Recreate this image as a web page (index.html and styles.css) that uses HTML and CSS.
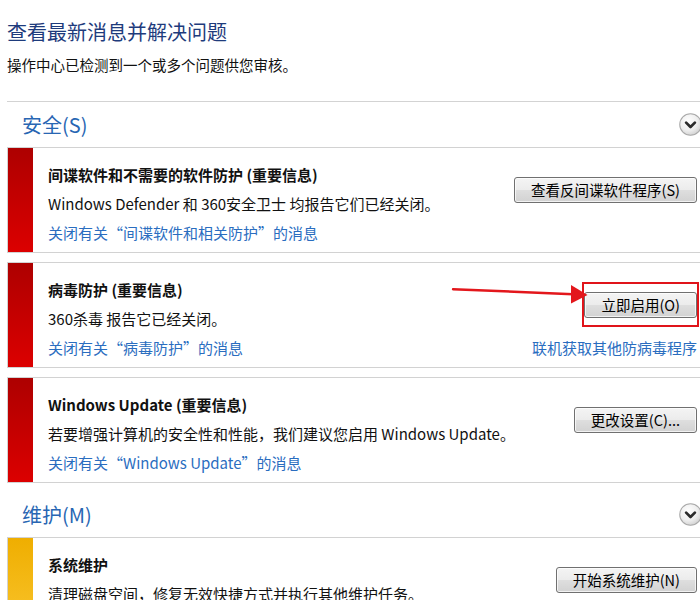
FILE: index.html
```html
<!DOCTYPE html>
<html lang="zh-CN">
<head>
<meta charset="utf-8">
<title>操作中心</title>
<link rel="stylesheet" href="styles.css">
</head>
<body>
<div class="page">
  <h1 class="title">查看最新消息并解决问题</h1>
  <p class="subtitle">操作中心已检测到一个或多个问题供您审核。</p>
  <div class="sep"></div>

  <div class="section-head">
    <span class="section-name">安全(S)</span>
    <svg class="chev" viewBox="0 0 22 22" width="23" height="23">
      <defs>
        <radialGradient id="cg" cx="40%" cy="35%" r="70%">
          <stop offset="0" stop-color="#ffffff"/>
          <stop offset="0.6" stop-color="#eeeeee"/>
          <stop offset="1" stop-color="#cfcfcf"/>
        </radialGradient>
      </defs>
      <circle cx="11" cy="11" r="10.3" fill="url(#cg)" stroke="#a9a9a9" stroke-width="1"/>
      <path d="M6.8 9.2 L11 13.4 L15.2 9.2" fill="none" stroke="#2b2b2b" stroke-width="2.6" stroke-linecap="round" stroke-linejoin="round"/>
    </svg>
  </div>

  <div class="card">
    <div class="bar red"></div>
    <div class="body">
      <div class="info">
        <div class="row strong">间谍软件和不需要的软件防护 (重要信息)</div>
        <div class="row">Windows Defender 和 360安全卫士 均报告它们已经关闭。</div>
        <div class="row link">关闭有关“间谍软件和相关防护”的消息</div>
      </div>
      <div class="actions">
        <span class="btn">查看反间谍软件程序(S)</span>
      </div>
    </div>
  </div>

  <div class="card">
    <div class="bar red"></div>
    <div class="body">
      <div class="info">
        <div class="row strong">病毒防护 (重要信息)</div>
        <div class="row">360杀毒 报告它已经关闭。</div>
        <div class="row link">关闭有关“病毒防护”的消息</div>
      </div>
      <div class="actions">
        <span class="btn highlight">立即启用(O)</span>
        <span class="row link">联机获取其他防病毒程序</span>
      </div>
    </div>
    <svg class="arrow" viewBox="0 0 145 26" width="145" height="26">
      <path d="M5 7.2 L125 12.2" stroke="#e3171c" stroke-width="2.4" fill="none" stroke-linecap="round"/>
      <polygon points="123,3 139.5,13 123,21.5" fill="#e3171c"/>
    </svg>
  </div>

  <div class="card">
    <div class="bar red"></div>
    <div class="body">
      <div class="info">
        <div class="row strong">Windows Update (重要信息)</div>
        <div class="row">若要增强计算机的安全性和性能，我们建议您启用 Windows Update。</div>
        <div class="row link">关闭有关“Windows Update”的消息</div>
      </div>
      <div class="actions">
        <span class="btn">更改设置(C)...</span>
      </div>
    </div>
  </div>

  <div class="section-head">
    <span class="section-name">维护(M)</span>
    <svg class="chev" viewBox="0 0 22 22" width="23" height="23">
      <circle cx="11" cy="11" r="10.3" fill="url(#cg)" stroke="#a9a9a9" stroke-width="1"/>
      <path d="M6.8 9.2 L11 13.4 L15.2 9.2" fill="none" stroke="#2b2b2b" stroke-width="2.6" stroke-linecap="round" stroke-linejoin="round"/>
    </svg>
  </div>

  <div class="card">
    <div class="bar yellow"></div>
    <div class="body">
      <div class="info">
        <div class="row strong">系统维护</div>
        <div class="row">清理磁盘空间，修复无效快捷方式并执行其他维护任务。</div>
      </div>
      <div class="actions">
        <span class="btn">开始系统维护(N)</span>
      </div>
    </div>
  </div>
</div>
</body>
</html>
```

FILE: styles.css
```css
html, body {
  margin: 0;
  padding: 0;
  background: #ffffff;
}

.page {
  width: 700px;
  height: 600px;
  overflow: hidden;
  padding: 18px 0 0 7px;
  box-sizing: border-box;
  font-family: "Noto Sans CJK SC", "Noto Sans", sans-serif;
  color: #111111;
}

.title {
  margin: 0;
  font-size: 20px;
  font-weight: 400;
  line-height: 28px;
  color: #1e3b7c;
}

.subtitle {
  margin: 8px 0 0;
  font-size: 14.5px;
  line-height: 22px;
  color: #111111;
}

.sep {
  height: 1px;
  background: #d3d3d3;
  margin-top: 25px;
}

.section-head {
  height: 45px;
  display: flex;
  align-items: center;
  justify-content: space-between;
  padding-left: 15px;
}

.section-name {
  font-size: 20px;
  line-height: 28px;
  color: #2866b3;
}

.chev {
  display: block;
  margin-right: -2px;
}

.card {
  position: relative;
  display: flex;
  border: 1px solid #d2d2d2;
  border-right: none;
  margin-bottom: 9px;
  background: #ffffff;
}

.bar {
  width: 25px;
  flex: none;
}

.bar.red {
  background: linear-gradient(#ad0000, #dc0000);
}

.bar.yellow {
  background: linear-gradient(#efae00, #fac733);
}

.body {
  flex: 1;
  display: flex;
  justify-content: space-between;
  padding: 12px 3px 5px 15px;
  min-height: 87px;
}

.row {
  font-size: 15px;
  line-height: 29px;
  white-space: nowrap;
}

.strong {
  font-weight: 700;
}

.link {
  color: #2a6dbf;
}

.actions {
  display: flex;
  flex-direction: column;
  align-items: flex-end;
  justify-content: space-between;
}

.btn {
  position: relative;
  display: block;
  margin-top: 17px;
  height: 26px;
  box-sizing: border-box;
  padding: 0 16px;
  font-size: 14.5px;
  line-height: 24px;
  color: #000000;
  white-space: nowrap;
  border: 1px solid #707070;
  border-radius: 3px;
  background: linear-gradient(#f4f4f4 0%, #ececec 48%, #dedede 52%, #d2d2d2 100%);
  box-shadow: inset 0 0 0 1px rgba(255, 255, 255, 0.7);
}

.btn.highlight::after {
  content: "";
  position: absolute;
  top: -11px;
  bottom: -10px;
  left: -3px;
  right: -3px;
  border: 2px solid #e0141a;
}

.arrow {
  position: absolute;
  left: 440px;
  top: 19px;
}
```
